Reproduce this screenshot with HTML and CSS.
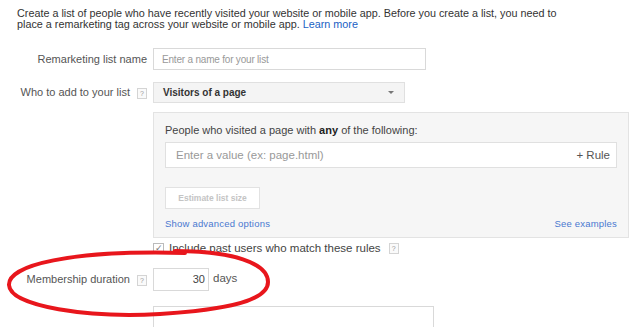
FILE: index.html
```html
<html>
  <head>
    <title>New remarketing list</title>
    <link rel="stylesheet" href="styles.css">
  </head>
  <body>
    <div class="page">
      <p class="intro">
        Create a list of people who have recently visited your website or mobile app. Before you create a list, you need to<br>
        place a remarketing tag across your website or mobile app. <a href="#">Learn more</a>
      </p>

      <div class="row row-name">
        <span class="label">Remarketing list name</span>
        <div class="field name-field"><span class="placeholder">Enter a name for your list</span></div>
      </div>

      <div class="row row-who">
        <span class="label">Who to add to your list <span class="help">?</span></span>
        <div class="select">
          <span>Visitors of a page</span>
          <span class="caret"></span>
        </div>
      </div>

      <div class="panel">
        <p class="panel-title">People who visited a page with <b>any</b> of the following:</p>
        <div class="rule-field">
          <span class="placeholder">Enter a value (ex: page.html)</span>
          <span class="add-rule">+ Rule</span>
        </div>
        <div class="estimate">Estimate list size</div>
        <div class="panel-links">
          <a href="#">Show advanced options</a>
          <a href="#">See examples</a>
        </div>
      </div>

      <div class="check-row">
        <span class="checkbox">&#10003;</span>
        <span>Include past users who match these rules</span>
        <span class="help">?</span>
      </div>

      <div class="row row-duration">
        <span class="label">Membership duration <span class="help">?</span></span>
        <div class="field days-field">30</div>
        <span class="days">days</span>
      </div>

      <div class="row row-last">
        <span class="label"></span>
        <div class="field last-field"></div>
      </div>

      <!-- hand drawn highlight -->
      <svg class="scribble" width="639" height="327" viewBox="0 0 639 327">
        <path d="M 175 251 C 232 251, 268 263, 268 282 C 268 301, 225 310, 160 314 C 90 318, 10 307, 9 285 C 8 265, 70 250, 185 253"
              fill="none" stroke="#e8161c" stroke-width="4" stroke-linecap="round"/>
      </svg>
    </div>
  </body>
</html>
```

FILE: styles.css
```css
body {
  margin: 0;
  background: #fff;
  color: #444;
  font-family: "Liberation Sans", Arial, sans-serif;
  font-size: 11px;
  overflow: hidden;
}
a {
  color: #1a5fc4;
  text-decoration: none;
}
.page {
  position: relative;
  width: 639px;
  height: 327px;
  padding: 8px 0 0 17px;
  box-sizing: border-box;
  overflow: hidden;
}
.intro {
  margin: 0;
  font-size: 10.8px;
  line-height: 11px;
  color: #333;
}
.row {
  display: flex;
  align-items: center;
  margin-left: -17px;
}
.label {
  width: 147px;
  flex: none;
  text-align: right;
  padding-right: 6px;
  color: #555;
}
.help {
  display: inline-block;
  width: 8px;
  height: 9px;
  margin-left: 4px;
  border: 1px solid #d4d4d4;
  background: #fafafa;
  color: #999;
  font-size: 7px;
  line-height: 9px;
  text-align: center;
  vertical-align: middle;
}
.field {
  height: 20px;
  border: 1px solid #d9d9d9;
  background: #fff;
}
.placeholder {
  color: #999;
}
.row-name {
  margin-top: 18px;
}
.name-field {
  width: 263px;
  padding-left: 8px;
  display: flex;
  align-items: center;
  font-size: 10px;
  letter-spacing: -0.2px;
}
.row-who {
  margin-top: 12px;
}
.select {
  display: flex;
  align-items: center;
  justify-content: space-between;
  width: 231px;
  height: 19px;
  padding: 0 10px 0 9px;
  border: 1px solid #e0e0e0;
  background: #f4f4f4;
  color: #333;
  font-size: 10px;
  font-weight: bold;
}
.caret {
  width: 0;
  height: 0;
  border-left: 3px solid transparent;
  border-right: 3px solid transparent;
  border-top: 3px solid #777;
}
.panel {
  margin: 9px 0 0 136px;
  width: 452px;
  padding: 11px 11px 7px;
  border: 1px solid #e3e3e3;
  background: #f6f6f6;
}
.panel-title {
  margin: 0;
  line-height: 13px;
  color: #444;
}
.panel-title b {
  color: #222;
}
.rule-field {
  display: flex;
  align-items: center;
  justify-content: space-between;
  height: 24px;
  margin-top: 5px;
  padding: 0 6px 0 10px;
  border: 1px solid #e0e0e0;
  background: #fff;
  font-size: 11.5px;
}
.add-rule {
  color: #555;
}
.estimate {
  margin-top: 19px;
  width: 93px;
  height: 20px;
  line-height: 20px;
  border: 1px solid #e2e2e2;
  background: #fff;
  color: #c4c4c4;
  font-size: 8.5px;
  font-weight: bold;
  text-align: center;
}
.panel-links {
  display: flex;
  justify-content: space-between;
  margin-top: 9px;
  line-height: 12px;
  font-size: 9.5px;
  letter-spacing: 0.2px;
}
.panel-links a {
  color: #4a78d0;
}
.check-row {
  display: flex;
  align-items: center;
  gap: 5px;
  margin: 3px 0 0 136px;
  height: 14px;
  color: #444;
  font-size: 11.5px;
}
.checkbox {
  width: 9px;
  height: 9px;
  border: 1px solid #bbb;
  background: #fff;
  color: #777;
  font-size: 9px;
  line-height: 9px;
  text-align: center;
}
.check-row .help {
  margin-left: 3px;
}
.row-duration {
  margin-top: 13px;
}
.days-field {
  width: 51px;
  height: 21px;
  padding-right: 3px;
  line-height: 21px;
  text-align: right;
  color: #444;
}
.days {
  margin-left: 4px;
  margin-top: -3px;
  color: #555;
  font-size: 11.5px;
}
.row-last {
  margin-top: 15px;
}
.last-field {
  width: 279px;
  height: 30px;
}
.scribble {
  position: absolute;
  left: 0;
  top: 0;
  pointer-events: none;
}
```
